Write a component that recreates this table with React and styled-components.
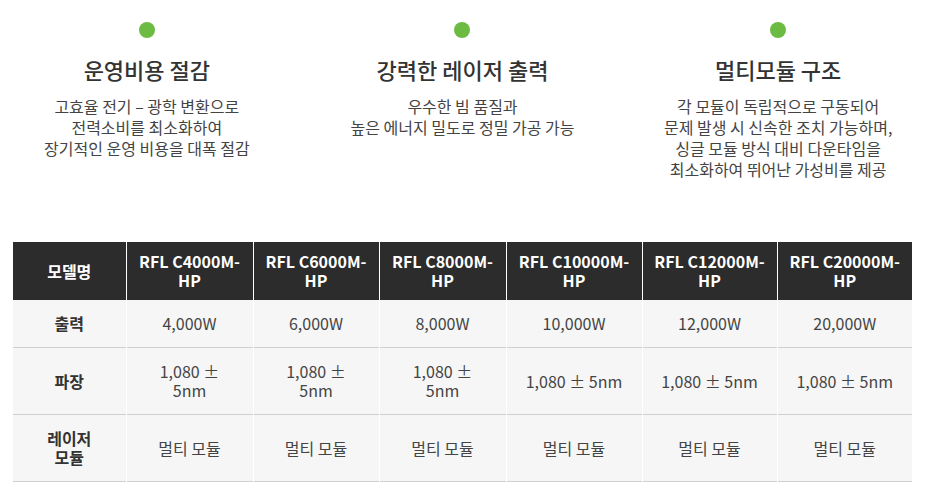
import React from "react";
import styled, { createGlobalStyle } from "styled-components";

const GlobalStyle = createGlobalStyle`
  html, body { margin: 0; padding: 0; background: #ffffff; }
  body { font-family: "Noto Sans CJK KR", "Noto Sans", sans-serif; color: #333; }
`;

const Page = styled.div`
  width: 899px;
  padding: 22px 0 0 13px;
`;

const Features = styled.div`
  display: grid;
  grid-template-columns: repeat(3, 1fr);
  column-gap: 48px;
`;

const Feature = styled.div`
  display: flex;
  flex-direction: column;
  align-items: center;
  text-align: center;
`;

const Dot = styled.span`
  display: block;
  width: 16px;
  height: 16px;
  border-radius: 50%;
  background: #6cbb42;
`;

const Title = styled.h3`
  margin: 16px 0 0;
  font-size: 22px;
  line-height: 30px;
  font-weight: 500;
  color: #333;
`;

const Desc = styled.p`
  margin: 12px 0 0;
  font-size: 16px;
  line-height: 21px;
  color: #444;
  white-space: pre-line;
`;

const Table = styled.table`
  margin-top: 62px;
  width: 899px;
  border-collapse: collapse;
  table-layout: fixed;
  font-size: 16px;
  line-height: 19px;
`;

const Col = styled.col`
  width: ${(p) => p.$w}px;
`;

const HeadCell = styled.th`
  background: #2c2c2c;
  color: #fff;
  font-weight: 700;
  padding: 10px ${(p) => (p.$label ? 24 : 8)}px;
  border-left: 1px solid #fff;
  text-align: center;
  &:first-child { border-left: none; }
`;

const Row = styled.tr`
  background: #f6f6f6;
  border-bottom: 1px solid #cfcfcf;
`;

const RowHead = styled.th`
  padding: 14px 24px;
  font-weight: 700;
  color: #333;
  text-align: center;
  word-break: keep-all;
`;

const Cell = styled.td`
  padding: 14px 17px;
  color: #444;
  text-align: center;
  border-left: 1px solid #fff;
  word-break: keep-all;
`;

const features = [
  {
    title: "운영비용 절감",
    desc: "고효율 전기 – 광학 변환으로\n전력소비를 최소화하여\n장기적인 운영 비용을 대폭 절감",
  },
  {
    title: "강력한 레이저 출력",
    desc: "우수한 빔 품질과\n높은 에너지 밀도로 정밀 가공 가능",
  },
  {
    title: "멀티모듈 구조",
    desc: "각 모듈이 독립적으로 구동되어\n문제 발생 시 신속한 조치 가능하며,\n싱글 모듈 방식 대비 다운타임을\n최소화하여 뛰어난 가성비를 제공",
  },
];

const widths = [113, 127, 126, 127, 136, 135, 135];
const models = ["4000", "6000", "8000", "10000", "12000", "20000"];
const rows = [
  { label: "출력", values: ["4,000W", "6,000W", "8,000W", "10,000W", "12,000W", "20,000W"] },
  { label: "파장", values: models.map(() => "1,080 ± 5nm") },
  { label: "레이저 모듈", values: models.map(() => "멀티 모듈") },
];

export default function App() {
  return (
    <>
      <GlobalStyle />
      <Page>
        <Features>
          {features.map((f) => (
            <Feature key={f.title}>
              <Dot />
              <Title>{f.title}</Title>
              <Desc>{f.desc}</Desc>
            </Feature>
          ))}
        </Features>
        <Table>
          <colgroup>
            {widths.map((w, i) => (
              <Col key={i} $w={w} />
            ))}
          </colgroup>
          <thead>
            <tr>
              <HeadCell $label>모델명</HeadCell>
              {models.map((m) => (
                <HeadCell key={m}>RFL C{m}M-HP</HeadCell>
              ))}
            </tr>
          </thead>
          <tbody>
            {rows.map((r) => (
              <Row key={r.label}>
                <RowHead>{r.label}</RowHead>
                {r.values.map((v, i) => (
                  <Cell key={i}>{v}</Cell>
                ))}
              </Row>
            ))}
          </tbody>
        </Table>
      </Page>
    </>
  );
}
